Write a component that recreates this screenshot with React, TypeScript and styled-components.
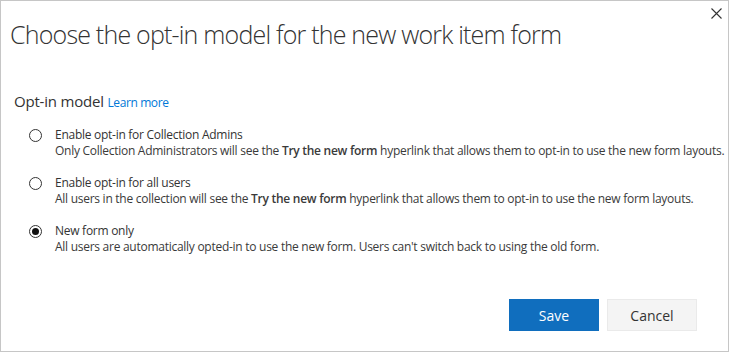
import styled, { createGlobalStyle } from "styled-components";
import { useState } from "react";

const GlobalStyle = createGlobalStyle`
  html, body {
    margin: 0;
    padding: 0;
    background: #fff;
  }
  body {
    font-family: "Segoe UI", "Open Sans", "Noto Sans", sans-serif;
    color: #333;
  }
`;

const options = [
  {
    id: "admins",
    label: "Enable opt-in for Collection Admins",
    lead: "Only Collection Administrators will see the ",
    tail: " hyperlink that allows them to opt-in to use the new form layouts.",
  },
  {
    id: "all",
    label: "Enable opt-in for all users",
    lead: "All users in the collection will see the ",
    tail: " hyperlink that allows them to opt-in to use the new form layouts.",
  },
  {
    id: "new",
    label: "New form only",
    lead: "All users are automatically opted-in to use the new form. Users can't switch back to using the old form.",
    tail: "",
  },
];

const App = () => {
  const [selected, setSelected] = useState("new");

  return (
    <>
      <GlobalStyle />
      <Dialog>
        <CloseButton aria-label="Close">
          <svg width="11" height="11" viewBox="0 0 11 11">
            <path d="M0.5 0.5 L10.5 10.5 M10.5 0.5 L0.5 10.5" stroke="#333" strokeWidth="1.1" />
          </svg>
        </CloseButton>
        <Title>Choose the opt-in model for the new work item form</Title>
        <Section>
          <SectionHeader>
            Opt-in model <LearnMore href="#">Learn more</LearnMore>
          </SectionHeader>
          <OptionList>
            {options.map((o) => (
              <Option key={o.id} onClick={() => setSelected(o.id)}>
                <Radio $checked={selected === o.id} />
                <OptionText>
                  <OptionLabel>{o.label}</OptionLabel>
                  <OptionDesc>
                    {o.lead}
                    {o.tail && <strong>Try the new form</strong>}
                    {o.tail}
                  </OptionDesc>
                </OptionText>
              </Option>
            ))}
          </OptionList>
        </Section>
        <Footer>
          <PrimaryButton>Save</PrimaryButton>
          <SecondaryButton>Cancel</SecondaryButton>
        </Footer>
      </Dialog>
    </>
  );
};

const Dialog = styled.div`
  position: relative;
  box-sizing: border-box;
  width: 729px;
  height: 352px;
  border: 1px solid #c6c6c6;
  background: #fff;
  display: flex;
  flex-direction: column;
`;

const CloseButton = styled.button`
  position: absolute;
  top: 6px;
  right: 5px;
  width: 13px;
  height: 13px;
  padding: 1px;
  border: 0;
  background: transparent;
  display: flex;
  align-items: center;
  justify-content: center;
`;

const Title = styled.h1`
  margin: 17px 0 0 9px;
  font-weight: 300;
  font-size: 25px;
  line-height: 32px;
  color: #333;
  letter-spacing: -0.8px;
`;

const Section = styled.div`
  margin: 42px 0 0 13px;
`;

const SectionHeader = styled.div`
  font-size: 15px;
  line-height: 18px;
  letter-spacing: -0.2px;
  color: #333;
`;

const LearnMore = styled.a`
  font-size: 12px;
  letter-spacing: -0.4px;
  color: #0078d7;
  text-decoration: none;
`;

const OptionList = styled.div`
  margin-top: 15px;
  margin-left: 15px;
  display: flex;
  flex-direction: column;
  gap: 16px;
`;

const Option = styled.div`
  display: flex;
  gap: 13px;
  cursor: pointer;
`;

const Radio = styled.span<{ $checked: boolean }>`
  box-sizing: border-box;
  flex: none;
  width: 13px;
  height: 13px;
  margin-top: 2px;
  border-radius: 50%;
  border: 1px solid #333;
  position: relative;

  &::after {
    content: "";
    display: ${(p) => (p.$checked ? "block" : "none")};
    position: absolute;
    left: 2px;
    top: 2px;
    width: 7px;
    height: 7px;
    border-radius: 50%;
    background: #111;
  }
`;

const OptionText = styled.div`
  display: flex;
  flex-direction: column;
  letter-spacing: -0.27px;
`;

const OptionLabel = styled.div`
  font-size: 12px;
  line-height: 16px;
  color: #333;
`;

const OptionDesc = styled.div`
  font-size: 12px;
  line-height: 16px;
  color: #3a3a3a;
  white-space: nowrap;

  strong {
    font-weight: 600;
  }
`;

const Footer = styled.div`
  margin-top: auto;
  padding: 0 31px 20px 0;
  display: flex;
  justify-content: flex-end;
  gap: 8px;
`;

const ButtonBase = styled.button`
  box-sizing: border-box;
  width: 90px;
  height: 32px;
  font-family: inherit;
  font-size: 14px;
  border: 1px solid transparent;
  cursor: pointer;
`;

const PrimaryButton = styled(ButtonBase)`
  background: #106ebe;
  color: #fff;
`;

const SecondaryButton = styled(ButtonBase)`
  background: #f4f4f4;
  border-color: #eaeaea;
  color: #333;
`;

export default App;
